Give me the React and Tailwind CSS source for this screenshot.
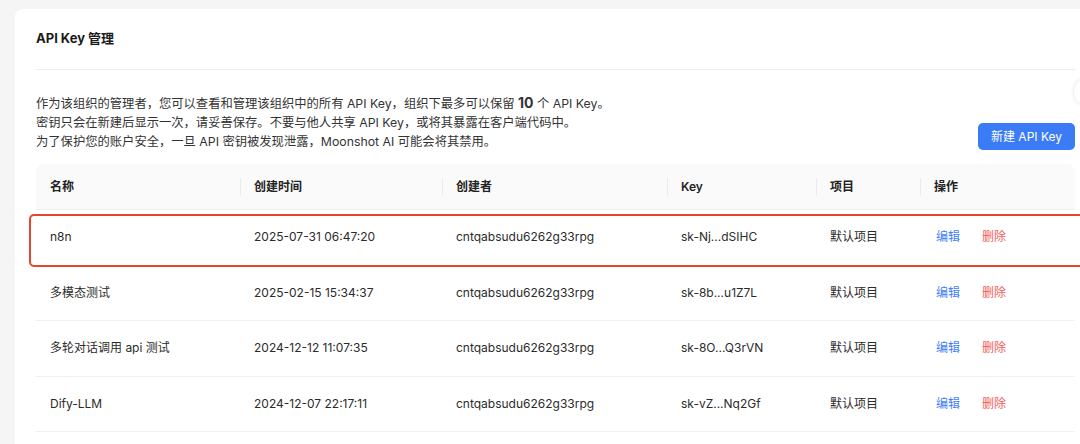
const rows = [
    { name: "n8n", time: "2025-07-31 06:47:20", owner: "cntqabsudu6262g33rpg", key: "sk-Nj...dSIHC", highlight: true },
    { name: "多模态测试", time: "2025-02-15 15:34:37", owner: "cntqabsudu6262g33rpg", key: "sk-8b...u1Z7L" },
    { name: "多轮对话调用 api 测试", time: "2024-12-12 11:07:35", owner: "cntqabsudu6262g33rpg", key: "sk-8O...Q3rVN" },
    { name: "Dify-LLM", time: "2024-12-07 22:17:11", owner: "cntqabsudu6262g33rpg", key: "sk-vZ...Nq2Gf" },
];

const cols = "grid grid-cols-[204px_202px_225px_149px_104px_1fr]";

const HeadCell = ({ children, first }) => (
    <div className="relative flex h-full items-center pl-[14px]">
        {!first && <div className="absolute left-0 top-1/2 h-[18px] w-px -translate-y-1/2 bg-[#ebebeb]" />}
        {children}
    </div>
);

const App = () => {
    return (
        <div
            className="relative min-h-screen overflow-hidden bg-[#f5f5f5] pt-[9px] pl-[15px] text-[#2b2b2b]"
            style={{ fontFamily: 'Inter, "Noto Sans CJK SC", sans-serif' }}
        >
            <div className="w-[1081px] rounded-lg bg-white px-[21px] pb-10">
                {/* title */}
                <div className="flex h-[61px] items-center border-b border-[#ededed]">
                    <h1 className="text-[13px] font-bold text-[#1a1a1a]">API Key 管理</h1>
                </div>

                {/* description + button */}
                <div className="mt-[23px] flex items-end justify-between">
                    <div className="text-[12.3px] leading-[19px] text-[#333]">
                        <p>
                            作为该组织的管理者，您可以查看和管理该组织中的所有 API Key，组织下最多可以保留{" "}
                            <span className="text-[14px] font-bold">10</span> 个 API Key。
                        </p>
                        <p>密钥只会在新建后显示一次，请妥善保存。不要与他人共享 API Key，或将其暴露在客户端代码中。</p>
                        <p>为了保护您的账户安全，一旦 API 密钥被发现泄露，Moonshot AI 可能会将其禁用。</p>
                    </div>
                    <button className="mb-[1px] h-[27px] w-[97px] rounded-[5px] bg-[#3b7bf6] text-[12px] text-white">
                        新建 API Key
                    </button>
                </div>

                {/* table */}
                <div className="mt-[13px] text-[12px]">
                    <div className={`${cols} h-[46px] rounded-t-lg border-b border-[#f0f0f0] bg-[#fafafa] font-semibold text-[#222]`}>
                        <HeadCell first>名称</HeadCell>
                        <HeadCell>创建时间</HeadCell>
                        <HeadCell>创建者</HeadCell>
                        <HeadCell>Key</HeadCell>
                        <HeadCell>项目</HeadCell>
                        <HeadCell>操作</HeadCell>
                    </div>
                    {rows.map((r) => (
                        <div
                            key={r.key}
                            className={`${cols} relative h-[55.5px] items-center border-b border-[#f0f0f0]`}
                        >
                            <span className="pl-[14px]">{r.name}</span>
                            <span className="pl-[14px]">{r.time}</span>
                            <span className="pl-[14px]">{r.owner}</span>
                            <span className="pl-[14px]">{r.key}</span>
                            <span className="pl-[14px]">默认项目</span>
                            <span className="flex gap-[22px] pl-[16px]">
                                <a className="text-[#3f7ef7]">编辑</a>
                                <a className="text-[#f25c58]">删除</a>
                            </span>
                            {r.highlight && (
                                <div className="pointer-events-none absolute left-[-7px] right-[-40px] top-[4px] bottom-[-2px] rounded-[5px] border-2 border-[#e8452f]" />
                            )}
                        </div>
                    ))}
                </div>
            </div>

            {/* floating edge widget */}
            <div className="absolute right-[-22px] top-[78px] h-[28px] w-[28px] rounded-full bg-white shadow-[0_0_4px_rgba(0,0,0,0.12)]" />
        </div>
    );
};

export default App;
